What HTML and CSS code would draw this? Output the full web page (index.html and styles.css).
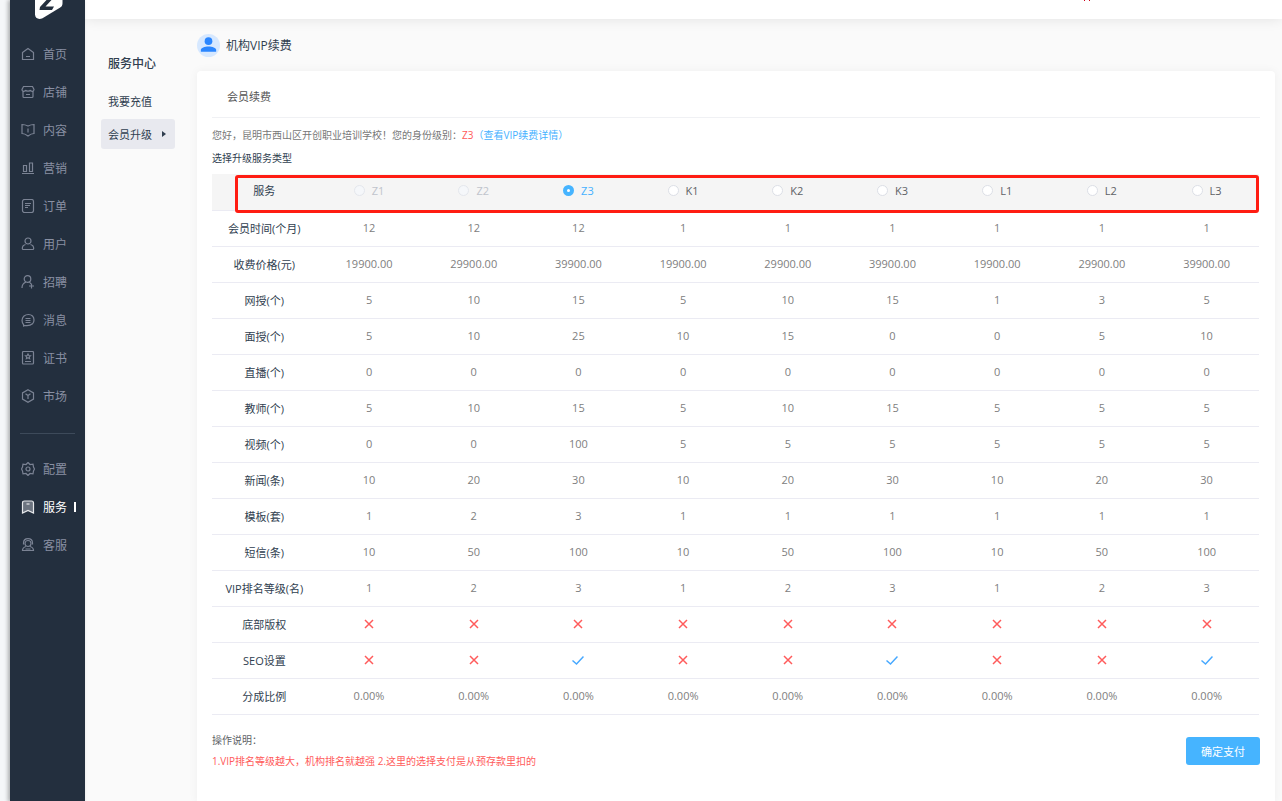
FILE: index.html
```html
<!DOCTYPE html>
<html lang="zh-CN">

<head>
    <meta charset="utf-8">
    <title>机构VIP续费</title>
    <link rel="stylesheet" href="styles.css">
</head>

<body>
    <svg class="defs" aria-hidden="true">
        <symbol id="no" viewBox="0 0 12 12"><path d="M2 2l8 8M10 2l-8 8" /></symbol>
        <symbol id="yes" viewBox="0 0 12 12"><path d="M0.5 6.5l4 3.5 7-7.5" /></symbol>
    </svg>

    <nav class="sidebar">
        <svg class="logo" viewBox="0 0 28 19" aria-hidden="true">
            <path fill="#fff" d="M0 0h27.500v3c0 2-.7 3.500-2.300 4.500L7.500 18.200C3.500 20.200 0 18 0 14.500z" />
            <path fill="#232f3e" d="M11.500 0h5L10.500 6.500h8.500l-2 3.500H4.500l.5-3z" />
        </svg>
        <ul class="menu">
            <li><a href="#"><svg viewBox="0 0 14 14"><path d="M1.500 5.500L7 1.500l5.500 4V12.500h-11zM5 9.500h4" /></svg>首页</a></li>
            <li><a href="#"><svg viewBox="0 0 14 14"><path d="M2.500 1.500h9l1.500 3c0 1-.7 1.800-1.800 1.800S9.500 5.500 9.500 5c-.5 1.500-4.500 1.500-5 0 0 .5-.6 1.300-1.700 1.300S1 5.500 1 4.500zM2 6.500V11.500q0 1 1 1h8q1 0 1-1V6.500M5 9.500h4" /></svg>店铺</a></li>
            <li><a href="#"><svg viewBox="0 0 14 14"><path d="M1 1.500c2.500 0 4 .5 6 1.500 2-1 3.500-1.500 6-1.500V10.500c-2.500 0-4 1-6 2.500-2-1.500-3.500-2.500-6-2.500zM7 5.500v4" /></svg>内容</a></li>
            <li><a href="#"><svg viewBox="0 0 14 14"><path d="M2.500 4.500h3v6h-3zM8.500 2h3v8.500h-3zM1 12.500h12" /></svg>营销</a></li>
            <li><a href="#"><svg viewBox="0 0 14 14"><rect x="1.500" y="0.500" width="11" height="13" rx="2" /><path d="M4 4.500h6M4 6.500h5M4 8.500h3" /></svg>订单</a></li>
            <li><a href="#"><svg viewBox="0 0 14 14"><circle cx="7" cy="4" r="3" /><path d="M4.500 7.500C2.500 8 1.300 9.500 1.300 11.500q0 1 1 1h9.400q1 0 1-1c0-2-1.200-3.500-3.200-4" /></svg>用户</a></li>
            <li><a href="#"><svg viewBox="0 0 14 14"><circle cx="6.500" cy="4" r="3.300" /><path d="M5 7C2.500 8 1 10 1 13M8.500 7l1.500 2M10.500 8.500v5M8 11h5" /></svg>招聘</a></li>
            <li><a href="#"><svg viewBox="0 0 14 14"><path d="M2.500 11.500C.3 9 .8 5 3 3c2.500-2 6.500-2 8.500 0 2 2 2 5.800 0 7.800-2 1.800-5 2.200-8 1.700l-.8.500zM4.500 5.500h5M4.500 7.500h5M4.500 9.500h5" /></svg>消息</a></li>
            <li><a href="#"><svg viewBox="0 0 14 14"><rect x="1.500" y="0.500" width="11" height="12.500" rx="1" /><path d="M7 3l.8 1.500 1.700.2-1.200 1.200.3 1.700L7 6.800l-1.600.8.300-1.700-1.200-1.200 1.700-.2zM4 10.500h6" /></svg>证书</a></li>
            <li><a href="#"><svg viewBox="0 0 14 14"><path d="M7 .700l5.500 3.200v6.200L7 13.300l-5.500-3.200V3.900zM4.500 4.700L7 6.500l2.500-1.800M7 6.500V10" /></svg>市场</a></li>
        </ul>
        <ul class="menu menu-bottom">
            <li><a href="#"><svg viewBox="0 0 14 14"><path d="M7 .500l2 2 3-.3.500 2.800L13.500 7l-1 2-.5 2.800-3-.3-2 2-2-2-3 .3L1.500 9l-1-2 1-2L2 2.200l3 .3z" /><circle cx="7" cy="7" r="2" /></svg>配置</a></li>
            <li><a href="#" class="active"><svg viewBox="0 0 14 14"><path class="fill" d="M1.500 3q0-2 2-2h7q2 0 2 2v10L7 10.500 1.500 13z" /><path d="M5.500 4h3" /></svg>服务</a></li>
            <li><a href="#"><svg viewBox="0 0 14 14"><circle cx="7" cy="5.500" r="3" /><path d="M2.500 6.500V5c0-5.800 9-5.800 9 0v1.500M5 8.500c-2 .5-3.500 1.500-3.500 4h11c0-2.500-1.500-3.500-3.500-4M4.500 11h5" /></svg>客服</a></li>
        </ul>
    </nav>

    <div class="page">
        <header class="topbar">
            <svg class="mark" viewBox="0 0 6 1" aria-hidden="true"><path d="M0 0h1v1H0zM5 0h1v1H5z" /></svg>
        </header>

        <div class="body">
            <aside class="submenu">
                <h2>服务中心</h2>
                <a href="#">我要充值</a>
                <a href="#" class="current">会员升级<i></i></a>
            </aside>

            <main class="main">
                <h1 class="page-title">
                    <svg viewBox="0 0 24 24" aria-hidden="true">
                        <circle cx="12" cy="12" r="12" fill="#d6e8ff" />
                        <circle cx="12" cy="7.500" r="4" fill="#2a86ff" />
                        <path fill="#2a86ff" d="M4 18.500v-2c0-2 4-3.500 8-3.500s8 1.500 8 3.500v2z" />
                    </svg>
                    机构VIP续费
                </h1>

                <form class="card">
                    <h3>会员续费</h3>
                    <p class="hello">您好，昆明市西山区开创职业培训学校！您的身份级别：<span class="red">Z3</span><a href="#">（查看VIP续费详情）</a></p>
                    <p class="choose">选择升级服务类型</p>

                    <div class="table-wrap">
                        <table>
                            <thead>
                                <tr>
                                    <th>服务</th>
                                    <th><label><input type="radio" name="level" disabled>Z1</label></th>
                                    <th><label><input type="radio" name="level" disabled>Z2</label></th>
                                    <th><label><input type="radio" name="level" checked>Z3</label></th>
                                    <th><label><input type="radio" name="level">K1</label></th>
                                    <th><label><input type="radio" name="level">K2</label></th>
                                    <th><label><input type="radio" name="level">K3</label></th>
                                    <th><label><input type="radio" name="level">L1</label></th>
                                    <th><label><input type="radio" name="level">L2</label></th>
                                    <th><label><input type="radio" name="level">L3</label></th>
                                </tr>
                            </thead>
                            <tbody>
                                <tr><th>会员时间(个月)</th><td>12</td><td>12</td><td>12</td><td>1</td><td>1</td><td>1</td><td>1</td><td>1</td><td>1</td></tr>
                                <tr><th>收费价格(元)</th><td>19900.00</td><td>29900.00</td><td>39900.00</td><td>19900.00</td><td>29900.00</td><td>39900.00</td><td>19900.00</td><td>29900.00</td><td>39900.00</td></tr>
                                <tr><th>网授(个)</th><td>5</td><td>10</td><td>15</td><td>5</td><td>10</td><td>15</td><td>1</td><td>3</td><td>5</td></tr>
                                <tr><th>面授(个)</th><td>5</td><td>10</td><td>25</td><td>10</td><td>15</td><td>0</td><td>0</td><td>5</td><td>10</td></tr>
                                <tr><th>直播(个)</th><td>0</td><td>0</td><td>0</td><td>0</td><td>0</td><td>0</td><td>0</td><td>0</td><td>0</td></tr>
                                <tr><th>教师(个)</th><td>5</td><td>10</td><td>15</td><td>5</td><td>10</td><td>15</td><td>5</td><td>5</td><td>5</td></tr>
                                <tr><th>视频(个)</th><td>0</td><td>0</td><td>100</td><td>5</td><td>5</td><td>5</td><td>5</td><td>5</td><td>5</td></tr>
                                <tr><th>新闻(条)</th><td>10</td><td>20</td><td>30</td><td>10</td><td>20</td><td>30</td><td>10</td><td>20</td><td>30</td></tr>
                                <tr><th>模板(套)</th><td>1</td><td>2</td><td>3</td><td>1</td><td>1</td><td>1</td><td>1</td><td>1</td><td>1</td></tr>
                                <tr><th>短信(条)</th><td>10</td><td>50</td><td>100</td><td>10</td><td>50</td><td>100</td><td>10</td><td>50</td><td>100</td></tr>
                                <tr><th>VIP排名等级(名)</th><td>1</td><td>2</td><td>3</td><td>1</td><td>2</td><td>3</td><td>1</td><td>2</td><td>3</td></tr>
                                <tr>
                                    <th>底部版权</th>
                                    <td><svg class="no"><use href="#no" /></svg></td>
                                    <td><svg class="no"><use href="#no" /></svg></td>
                                    <td><svg class="no"><use href="#no" /></svg></td>
                                    <td><svg class="no"><use href="#no" /></svg></td>
                                    <td><svg class="no"><use href="#no" /></svg></td>
                                    <td><svg class="no"><use href="#no" /></svg></td>
                                    <td><svg class="no"><use href="#no" /></svg></td>
                                    <td><svg class="no"><use href="#no" /></svg></td>
                                    <td><svg class="no"><use href="#no" /></svg></td>
                                </tr>
                                <tr>
                                    <th>SEO设置</th>
                                    <td><svg class="no"><use href="#no" /></svg></td>
                                    <td><svg class="no"><use href="#no" /></svg></td>
                                    <td><svg class="yes"><use href="#yes" /></svg></td>
                                    <td><svg class="no"><use href="#no" /></svg></td>
                                    <td><svg class="no"><use href="#no" /></svg></td>
                                    <td><svg class="yes"><use href="#yes" /></svg></td>
                                    <td><svg class="no"><use href="#no" /></svg></td>
                                    <td><svg class="no"><use href="#no" /></svg></td>
                                    <td><svg class="yes"><use href="#yes" /></svg></td>
                                </tr>
                                <tr><th>分成比例</th><td>0.00%</td><td>0.00%</td><td>0.00%</td><td>0.00%</td><td>0.00%</td><td>0.00%</td><td>0.00%</td><td>0.00%</td><td>0.00%</td></tr>
                            </tbody>
                        </table>
                        <div class="highlight"></div>
                    </div>

                    <div class="bottom">
                        <div class="notes">
                            <p>操作说明：</p>
                            <p class="red">1.VIP排名等级越大，机构排名就越强 2.这里的选择支付是从预存款里扣的</p>
                        </div>
                        <button type="submit">确定支付</button>
                    </div>
                </form>
            </main>
        </div>
    </div>
</body>

</html>
```
FILE: styles.css
```css
* {
    box-sizing: border-box;
}

body {
    margin: 0;
    padding-left: 10px;
    display: flex;
    min-height: 100vh;
    background-color: #f5f7f9;
    color: #303e4f;
    font-family: "Open Sans", "Noto Sans CJK SC", sans-serif;
    font-size: 11px;
}

h1, h2, h3, p, ul {
    margin: 0;
    padding: 0;
    font-weight: normal;
}

a {
    color: inherit;
    text-decoration: none;
}

.defs {
    position: absolute;
    width: 0;
    height: 0;
}

.red {
    color: #ff5b5b;
}

/* sidebar */
.sidebar {
    flex: 0 0 75px;
    min-width: 0;
    z-index: 2;
    background-color: #232f3e;
    box-shadow: -2px 0 4px rgba(0, 0, 0, 0.3);
}

.logo {
    display: block;
    width: 28px;
    height: 19px;
    margin-left: 25px;
}

.menu {
    list-style: none;
    margin: 0 10px;
    padding: 16px 0 18px;
}

.menu-bottom {
    border-top: 1px solid #3d4a5a;
}

.menu a {
    display: flex;
    align-items: center;
    height: 38px;
    padding-left: 1px;
    gap: 8px;
    color: #8990a3;
    font-size: 12px;
    white-space: nowrap;
}

.menu svg {
    flex: none;
    width: 14px;
    height: 14px;
    fill: none;
    stroke: #7b8394;
    stroke-width: 1.2;
}

.menu .active {
    color: #fff;
}

.menu .active svg {
    stroke: #e6e8eb;
}

.menu .active .fill {
    fill: #6c7480;
}

.menu .active::after {
    content: "";
    flex: none;
    width: 2px;
    height: 10px;
    margin-left: -1px;
    background-color: #fff;
}

/* page */
.page {
    flex: 1;
    min-width: 0;
    display: flex;
    flex-direction: column;
    background-color: #fafafa;
    z-index: 1;
}

.topbar {
    height: 19px;
    background-color: #fff;
    box-shadow: 0 0 14px rgba(0, 0, 0, 0.1);
}

.mark {
    display: block;
    width: 6px;
    height: 1px;
    margin-left: auto;
    margin-right: 192px;
    fill: #d0021b;
}

.body {
    flex: 1;
    display: flex;
    padding-right: 7px;
}

.submenu {
    width: 112px;
    padding: 31px 22px 0 16px;
}

.submenu h2 {
    padding: 0 7px;
    margin-bottom: 8px;
    font-size: 12px;
    line-height: 28px;
    font-weight: 500;
}

.submenu a {
    display: flex;
    align-items: center;
    justify-content: space-between;
    height: 30px;
    margin-bottom: 3px;
    padding: 0 9px 0 7px;
    border-radius: 3px;
    white-space: nowrap;
}

.submenu .current {
    background-color: #e8e9ef;
}

.submenu i {
    border: 3px solid transparent;
    border-left: 4px solid #303e4f;
    border-right: 0;
}

.main {
    flex: 1;
    min-width: 0;
    display: flex;
    flex-direction: column;
}

.page-title {
    display: flex;
    align-items: center;
    gap: 6px;
    height: 52px;
    font-size: 12px;
}

.page-title svg {
    width: 23px;
    height: 23px;
}

.card {
    flex: 1;
    padding: 0 15px 30px;
    background-color: #fff;
    border-radius: 4px 4px 0 0;
    box-shadow: 0 0 10px rgba(0, 0, 0, 0.05);
}

.card h3 {
    height: 47px;
    padding: 4px 15px 0;
    border-bottom: 1px solid #f0f1f4;
    color: #555;
    font-size: 11px;
    line-height: 44px;
}

.hello,
.choose {
    font-size: 10px;
    line-height: 20px;
}

.hello {
    margin-top: 7px;
    color: #777;
}

.hello a {
    color: #46b1ff;
}

.choose {
    margin: 3px 0 6px;
}

/* price table */
.table-wrap {
    position: relative;
    margin-right: 1px;
}

table {
    width: 100%;
    table-layout: fixed;
    border-collapse: separate;
    border-spacing: 0;
}

th,
td {
    height: 36px;
    padding: 0 0 2px;
    border-bottom: 1px solid #ebebf3;
    font-weight: normal;
    text-align: center;
    white-space: nowrap;
}

td {
    color: #808080;
}

thead th {
    height: 37px;
    padding-bottom: 4px;
    background-color: #f5f5f5;
}

thead label {
    display: flex;
    align-items: center;
    justify-content: center;
    gap: 7px;
    color: #606266;
}

thead label:has(:disabled) {
    color: #c0c4cc;
}

thead label:has(:checked) {
    color: #46b1ff;
}

input[type=radio] {
    appearance: none;
    width: 11px;
    height: 11px;
    margin: 0;
    border: 1px solid #dcdfe6;
    border-radius: 50%;
    background-color: #fff;
}

input[type=radio]:disabled {
    background-color: #f5f7fa;
    border-color: #e4e7ed;
}

input[type=radio]:checked {
    border: 4px solid #46b4ff;
}

td svg {
    display: block;
    width: 12px;
    height: 12px;
    margin: 0 auto;
    fill: none;
    stroke-width: 1.5;
}

.no {
    stroke: #ff5b5b;
}

.yes {
    stroke: #46a8ff;
}

.highlight {
    position: absolute;
    top: 1px;
    left: 23px;
    right: 0;
    height: 38px;
    border: 3px solid #ff1c12;
    border-radius: 3px;
    pointer-events: none;
}

.bottom {
    display: flex;
    justify-content: space-between;
    align-items: center;
    margin-top: 15px;
    font-size: 10px;
    line-height: 21px;
}

.notes {
    color: #606266;
}

button {
    width: 74px;
    height: 28px;
    padding: 0;
    border: 0;
    border-radius: 3px;
    background-color: #46b4ff;
    color: #fff;
    font-family: inherit;
    font-size: 11px;
    cursor: pointer;
}
```
